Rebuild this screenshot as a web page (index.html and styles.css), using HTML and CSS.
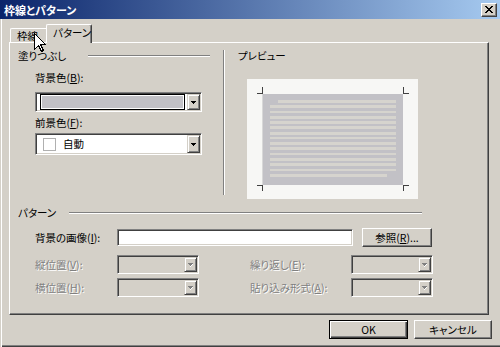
FILE: index.html
```html
<!DOCTYPE html>
<html lang="ja">
<head>
<meta charset="utf-8">
<title>枠線とパターン</title>
<link rel="stylesheet" href="styles.css">
</head>
<body>
<div class="win">
  <div class="titlebar">
    <span class="title">枠線とパターン</span>
    <span class="close"><svg width="8" height="7" viewBox="0 0 8 7" shape-rendering="crispEdges"><path d="M0 0h2v1h-2zM6 0h2v1h-2zM1 1h2v1h-2zM5 1h2v1h-2zM2 2h4v1h-4zM3 3h2v1h-2zM2 4h4v1h-4zM1 5h2v1h-2zM5 5h2v1h-2zM0 6h2v1h-2zM6 6h2v1h-2z" fill="#000"/></svg></span>
  </div>
  <div class="client">
    <div class="tabs">
      <div class="tab">枠線</div>
      <div class="tab active">パターン</div>
    </div>
    <div class="panel">
      <div class="top">
        <div class="fill">
          <div class="group-head"><span>塗りつぶし</span><i class="rule"></i></div>
          <div class="label ind l1">背景色(<u>B</u>):</div>
          <div class="combo combo-bg ind">
            <div class="field"><div class="sel"></div></div>
            <div class="drop"><svg width="5" height="3" viewBox="0 0 5 3" shape-rendering="crispEdges"><path d="M0 0h5v1h-5zM1 1h3v1h-3zM2 2h1v1h-1z" fill="#000"/></svg></div>
          </div>
          <div class="label ind l2">前景色(<u>F</u>):</div>
          <div class="combo combo-fg ind">
            <div class="field"><span class="chip"></span><span class="auto">自動</span></div>
            <div class="drop"><svg width="5" height="3" viewBox="0 0 5 3" shape-rendering="crispEdges"><path d="M0 0h5v1h-5zM1 1h3v1h-3zM2 2h1v1h-1z" fill="#000"/></svg></div>
          </div>
        </div>
        <div class="vsep"></div>
        <div class="preview-col">
          <div class="label">プレビュー</div>
          <div class="preview">
            <svg width="171" height="120" viewBox="0 0 171 120" shape-rendering="crispEdges">
              <rect x="0" y="0" width="171" height="120" fill="#f7f7f5"/>
              <rect x="15" y="15" width="141" height="91" fill="#c2c1c6"/>
              <rect x="15" y="15" width="1" height="91" fill="#d8d8d8"/>
              <g fill="#d6d4ce">
                <rect x="31" y="21" width="118" height="3"/>
                <rect x="23" y="26" width="126" height="3"/>
                <rect x="23" y="32" width="126" height="2"/>
                <rect x="23" y="37" width="126" height="3"/>
                <rect x="23" y="42" width="126" height="3"/>
                <rect x="23" y="47" width="126" height="3"/>
                <rect x="23" y="53" width="126" height="3"/>
                <rect x="23" y="58" width="126" height="2"/>
                <rect x="23" y="63" width="126" height="3"/>
                <rect x="23" y="68" width="126" height="3"/>
                <rect x="23" y="74" width="126" height="2"/>
                <rect x="23" y="79" width="126" height="3"/>
                <rect x="23" y="84" width="126" height="3"/>
                <rect x="23" y="90" width="126" height="2"/>
                <rect x="23" y="95" width="117" height="3"/>
              </g>
              <g fill="#404040">
                <rect x="10" y="14" width="6" height="1"/>
                <rect x="15" y="8" width="1" height="7"/>
                <rect x="156" y="14" width="6" height="1"/>
                <rect x="156" y="8" width="1" height="7"/>
                <rect x="10" y="106" width="6" height="1"/>
                <rect x="15" y="106" width="1" height="6"/>
                <rect x="156" y="106" width="6" height="1"/>
                <rect x="156" y="106" width="1" height="6"/>
              </g>
            </svg>
          </div>
        </div>
      </div>
      <div class="pattern">
        <div class="group-head wide"><span>パターン</span><i class="rule"></i></div>
        <div class="row r1">
          <div class="label cap">背景の画像(<u>I</u>):</div>
          <div class="input"></div>
          <div class="btn browse">参照(<u>R</u>)...</div>
        </div>
        <div class="row r2">
          <div class="label cap dis">縦位置(<u>V</u>):</div>
          <div class="combo dcombo"><div class="field"></div><div class="drop"><svg width="5" height="4" viewBox="0 0 5 4" shape-rendering="crispEdges"><path d="M0 0h5v1h-5zM1 1h3v1h-3zM2 2h1v1h-1z" fill="#808080"/><path d="M4 1h1v1h-1zM3 2h1v1h-1zM2 3h1v1h-1z" fill="#fff"/></svg></div></div>
          <div class="label cap2 dis">繰り返し(<u>E</u>):</div>
          <div class="combo dcombo"><div class="field"></div><div class="drop"><svg width="5" height="4" viewBox="0 0 5 4" shape-rendering="crispEdges"><path d="M0 0h5v1h-5zM1 1h3v1h-3zM2 2h1v1h-1z" fill="#808080"/><path d="M4 1h1v1h-1zM3 2h1v1h-1zM2 3h1v1h-1z" fill="#fff"/></svg></div></div>
        </div>
        <div class="row r3">
          <div class="label cap dis">横位置(<u>H</u>):</div>
          <div class="combo dcombo"><div class="field"></div><div class="drop"><svg width="5" height="4" viewBox="0 0 5 4" shape-rendering="crispEdges"><path d="M0 0h5v1h-5zM1 1h3v1h-3zM2 2h1v1h-1z" fill="#808080"/><path d="M4 1h1v1h-1zM3 2h1v1h-1zM2 3h1v1h-1z" fill="#fff"/></svg></div></div>
          <div class="label cap2 dis">貼り込み形式(<u>A</u>):</div>
          <div class="combo dcombo"><div class="field"></div><div class="drop"><svg width="5" height="4" viewBox="0 0 5 4" shape-rendering="crispEdges"><path d="M0 0h5v1h-5zM1 1h3v1h-3zM2 2h1v1h-1z" fill="#808080"/><path d="M4 1h1v1h-1zM3 2h1v1h-1zM2 3h1v1h-1z" fill="#fff"/></svg></div></div>
        </div>
      </div>
    </div>
    <div class="buttons">
      <div class="btn ok">OK</div>
      <div class="btn cancel">キャンセル</div>
    </div>
  </div>
  <svg class="cursor" width="12" height="19" viewBox="0 0 12 19" shape-rendering="crispEdges">
    <path d="M0.5 0.5V16.5L4.5 12.5L7.5 18.5L9.5 17.5L6.5 11.5H11.5Z" fill="#fff" stroke="#000" stroke-width="1"/>
  </svg>
</div>
</body>
</html>
```

FILE: styles.css
```css
* { box-sizing: border-box; }
html, body { margin: 0; padding: 0; }
body {
  width: 500px;
  height: 347px;
  overflow: hidden;
  background: #d4d0c8;
  font-family: "Noto Sans CJK JP", "Noto Sans", sans-serif;
  font-size: 10.5px;
  line-height: 12px;
  color: #000;
  font-feature-settings: "palt";
  white-space: nowrap;
}
.win {
  position: relative;
  width: 500px;
  height: 347px;
  background: #d4d0c8;
}
.titlebar {
  height: 19px;
  display: flex;
  align-items: center;
  justify-content: space-between;
  padding: 0 3px 0 4px;
  background: linear-gradient(to right, #0a246a 0%, #a6caf0 100%);
}
.title {
  color: #fff;
  font-weight: bold;
  font-size: 11px;
  line-height: 12px;
}
.close {
  width: 16px;
  height: 14px;
  display: flex;
  align-items: center;
  justify-content: center;
  background: #d4d0c8;
  border: 1px solid;
  border-color: #fff #404040 #404040 #fff;
  box-shadow: inset -1px -1px #808080;
}
.client {
  height: 328px;
  padding: 5px 0 0 9px;
  box-shadow: inset 1px 0 #d4d0c8, inset 2px 0 #fff, inset 0 -1px #404040, inset 0 -2px #808080;
}
.tabs {
  display: flex;
  align-items: flex-end;
  height: 19px;
  margin-bottom: -1px;
  padding-left: 1px;
}
.tab {
  height: 15px;
  width: 36px;
  padding: 1px 0 0 6px;
  line-height: 12px;
  border-top: 1px solid #fff;
  border-left: 1px solid #fff;
  border-top-left-radius: 2px;
}
.tab.active {
  position: relative;
  z-index: 1;
  height: 19px;
  width: 46px;
  padding: 2px 0 0 6px;
  font-size: 10.5px;
  background: #d4d0c8;
  border-right: 1px solid #404040;
  border-top-right-radius: 2px;
  box-shadow: inset -1px 0 #808080;
}
.panel {
  width: 480px;
  height: 273px;
  border: 1px solid;
  border-color: #fff #404040 #404040 #fff;
  box-shadow: inset -1px -1px #808080;
  padding-left: 8px;
}
.top {
  display: flex;
}
.fill {
  width: 197px;
  padding-top: 7px;
}
.group-head {
  display: flex;
  align-items: center;
  height: 12px;
  width: 192px;
}
.group-head.wide { width: 404px; }
.rule {
  flex: 1;
  height: 2px;
  margin-left: 22px;
  border-top: 1px solid #808080;
  border-bottom: 1px solid #fff;
}
.group-head.wide .rule { margin-left: 13px; }
.ind { margin-left: 17px; }
.l1 { margin-top: 10px; }
.l2 { margin-top: 5px; }
.combo {
  display: flex;
  border: 1px solid;
  border-color: #808080 #fff #fff #808080;
  box-shadow: inset 1px 1px #404040, inset -1px -1px #d4d0c8;
  padding: 1px;
  background: #fff;
}
.combo .field {
  flex: 1;
  display: flex;
  align-items: center;
}
.combo-bg {
  width: 167px;
  height: 20px;
  margin-top: 8px;
}
.combo-bg .field { padding: 0 2px 0 3px; }
.sel {
  flex: 1;
  height: 16px;
  border: 1px solid #000;
  box-shadow: inset 1px 1px #fff, inset -1px -1px #fff;
  background: #c2c1c6;
  padding: 1px;
}
.combo-fg {
  width: 167px;
  height: 22px;
  margin-top: 4px;
}
.chip {
  width: 13px;
  height: 13px;
  margin-left: 6px;
  background: #fff;
  border: 1px solid #b0b0b0;
}
.auto { margin-left: 7px; }
.drop {
  width: 13px;
  display: flex;
  align-items: center;
  justify-content: center;
  background: #d4d0c8;
  border: 1px solid;
  border-color: #d4d0c8 #404040 #404040 #d4d0c8;
  box-shadow: inset 1px 1px #fff, inset -1px -1px #808080;
}
.vsep {
  width: 2px;
  height: 145px;
  margin: 7px 0 0 8px;
  border-left: 1px solid #808080;
  border-right: 1px solid #fff;
}
.preview-col {
  margin-left: 13px;
  padding-top: 7px;
}
.preview {
  width: 171px;
  height: 120px;
  margin: 17px 0 0 9px;
}
.preview svg { display: block; }
.pattern { margin-top: 8px; }
.row {
  display: flex;
  align-items: center;
  height: 19px;
}
.r1 { margin-top: 9px; }
.r2 { margin-top: 8px; }
.r3 { margin-top: 4px; }
.cap { width: 99px; padding-left: 17px; }
.cap2 { width: 101px; margin-left: 51px; }
.dis {
  color: #808080;
  text-shadow: 1px 1px #fff;
}
.input {
  width: 236px;
  height: 17px;
  background: #fff;
  border: 1px solid;
  border-color: #808080 #fff #fff #808080;
  box-shadow: inset 1px 1px #404040, inset -1px -1px #d4d0c8;
}
.btn {
  display: flex;
  align-items: center;
  justify-content: center;
  height: 19px;
  background: #d4d0c8;
  border: 1px solid;
  border-color: #fff #404040 #404040 #fff;
  box-shadow: inset -1px -1px #808080;
}
.browse { width: 70px; margin-left: 9px; }
.dcombo {
  width: 82px;
  height: 19px;
  background: #d4d0c8;
}
.buttons {
  display: flex;
  justify-content: flex-end;
  gap: 6px;
  margin-top: 5px;
  padding-right: 8px;
}
.ok {
  width: 79px;
  border: 1px solid #000;
  box-shadow: inset 1px 1px #fff, inset -1px -1px #404040, inset -2px -2px #808080;
}
.cancel { width: 78px; }
.cursor {
  position: absolute;
  left: 34px;
  top: 33px;
  z-index: 5;
}
```
